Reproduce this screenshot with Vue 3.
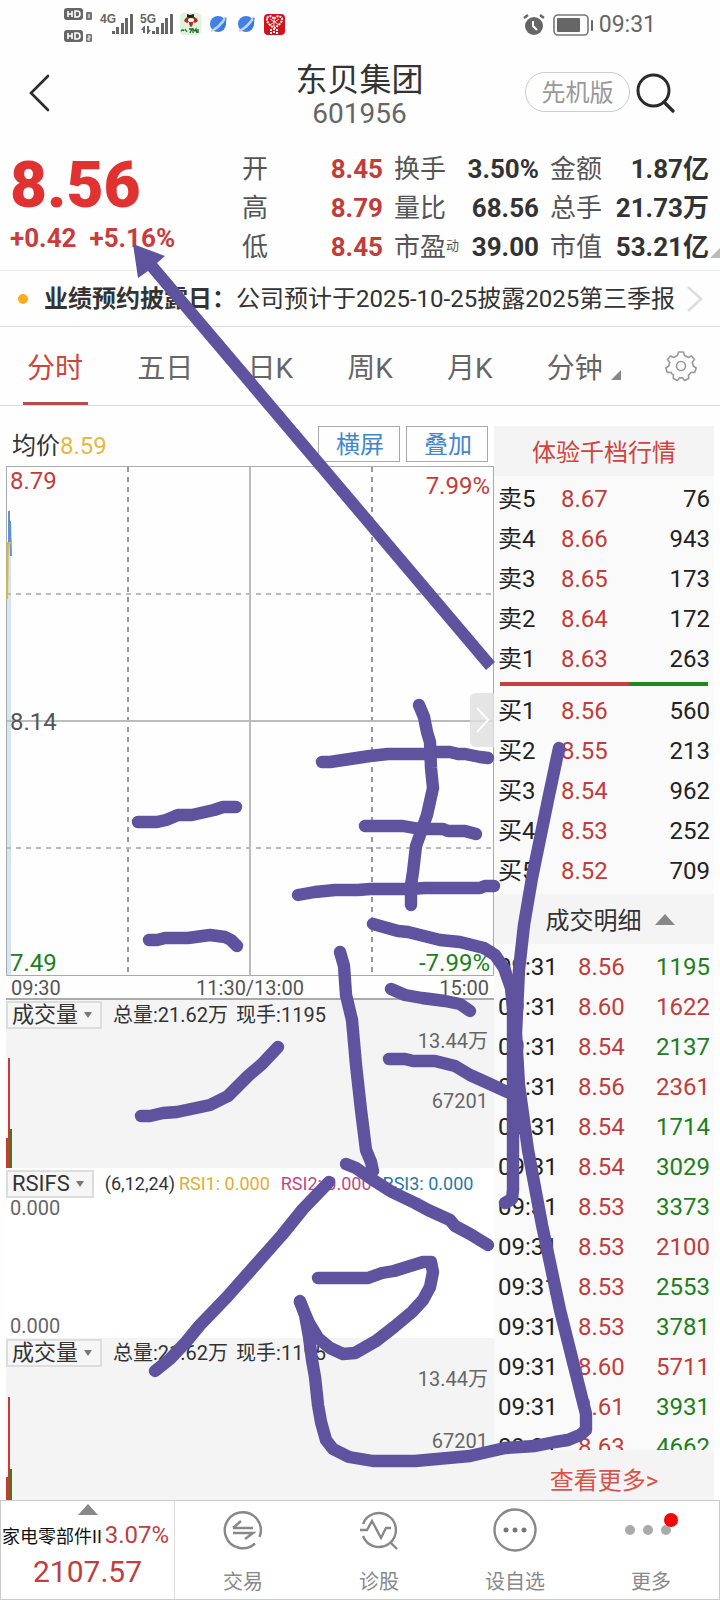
<script setup>
const quotes = [
  ['开', '8.45', '换手', '3.50%', '金额', '1.87亿'],
  ['高', '8.79', '量比', '68.56', '总手', '21.73万'],
  ['低', '8.45', '市盈', '39.00', '市值', '53.21亿'],
]
const tabs = ['分时', '五日', '日K', '周K', '月K']
const sells = [
  ['卖5', '8.67', '76'],
  ['卖4', '8.66', '943'],
  ['卖3', '8.65', '173'],
  ['卖2', '8.64', '172'],
  ['卖1', '8.63', '263'],
]
const buys = [
  ['买1', '8.56', '560'],
  ['买2', '8.55', '213'],
  ['买3', '8.54', '962'],
  ['买4', '8.53', '252'],
  ['买5', '8.52', '709'],
]
const trades = [
  ['8.56', '1195', 'down'],
  ['8.60', '1622', 'up'],
  ['8.54', '2137', 'down'],
  ['8.56', '2361', 'up'],
  ['8.54', '1714', 'down'],
  ['8.54', '3029', 'down'],
  ['8.53', '3373', 'down'],
  ['8.53', '2100', 'up'],
  ['8.53', '2553', 'down'],
  ['8.53', '3781', 'down'],
  ['8.60', '5711', 'up'],
  ['8.61', '3931', 'down'],
  ['8.63', '4662', 'down'],
]
const strokes = [
  '322,762 330,762 350,759 370,756 388,754 425,754 432,752 450,752 458,754 465,754 480,757 488,758',
  '419,705 424,717 427,732 430,742 431,768 433,788 427,815 416,846 413,872 411,885 411,905',
  '365,826 403,826 420,829 443,829 448,831 465,831 476,834',
  '298,895 315,892 335,890 358,890 370,889 410,889 425,888 480,888 485,886 494,886',
  '138,822 157,822 166,820 178,815 192,815 214,810 223,807 236,807',
  '149,940 157,940 165,938 188,938 210,935 225,937 231,940 237,946',
  '340,952 344,966 346,995 352,1020 356,1065 361,1110 366,1150 371,1162 373,1171',
  '373,924 398,931 408,932 440,940 460,942 484,948 495,955 504,968 511,988 513,1010 513,1190 512,1199 505,1203',
  '391,989 405,995 422,998 445,1001 460,1004 470,1011',
  '389,1059 405,1059 413,1061 435,1061 455,1066 470,1075 490,1084 507,1092',
  '346,1164 356,1168 370,1178 392,1192 415,1203 428,1210 450,1220 455,1226 470,1234 488,1245',
  '559,748 548,800 532,878 524,925 519,970 516,1033 519,1085 528,1150 542,1225 560,1310 580,1390 586,1414 586,1430 580,1435 568,1440 555,1442 535,1446 505,1448 470,1456 415,1461 373,1461 349,1457 333,1449 326,1440 321,1422 318,1405 315,1377 312,1360 309,1337 305,1315 300,1301',
  '318,1278 368,1278 382,1273 394,1271 423,1262 431,1262 433,1272 430,1287 423,1300 412,1312 394,1327 376,1341 355,1353 343,1354 330,1348 318,1338 309,1323 300,1302',
  '329,1182 303,1209 282,1235 227,1297 200,1325 186,1342 170,1359 155,1371',
  '141,1116 150,1116 163,1113 177,1112 210,1105 228,1096 248,1076 262,1064 278,1047',
]
</script>

<template>
  <div class="app">
    <div class="status">
      <div class="left">
        <svg class="hd" width="30" height="36" viewBox="0 0 30 36">
          <rect x="0" y="0" width="19" height="12" rx="3" fill="#666" />
          <rect x="0" y="22" width="19" height="12" rx="3" fill="#666" />
          <rect x="22" y="4" width="6" height="8" rx="1" fill="#777" />
          <rect x="22" y="26" width="6" height="8" rx="1" fill="#777" />
          <path d="M4 3v6M4 6h4M8 3v6M11 3v6h2q3 0 3-3t-3-3zM4 25v6M4 28h4M8 25v6M11 25v6h2q3 0 3-3t-3-3z" fill="none" stroke="#fff" stroke-width="1.6" />
          <path d="M25 6v4M24 28h2v2h-2v2h2" fill="none" stroke="#fff" stroke-width="1" />
        </svg>
        <div class="sig">
          <span>4G</span>
          <svg width="34" height="22" viewBox="0 0 34 22" fill="#666"><path d="M12 18h3v3h-3zM16 14h3v7h-3zM21 10h3v11h-3zM25 5h3v16h-3zM30 1h3v20h-3z" /></svg>
        </div>
        <div class="sig">
          <span>5G</span>
          <svg width="34" height="22" viewBox="0 0 34 22" fill="#666"><path d="M12 18h3v3h-3zM16 14h3v7h-3zM21 10h3v11h-3zM25 5h3v16h-3zM30 1h3v20h-3zM1 17l3-4h1v7H3v-3zM7 13h2v4h2l-3 4H7z" /></svg>
        </div>
        <svg class="a1" width="21" height="22" viewBox="0 0 21 22">
          <rect width="21" height="22" rx="4" fill="#dcf3dc" /><path d="M4 8q2-5 7-4q5-1 7 4l-3 2-2-1q0 4-2 5q-2-1-2-5L7 10z" fill="#b32a20" /><path d="M7 1l3 1 4-1v3l-4 1-3-1z" fill="#222" /><ellipse cx="11" cy="7" rx="3" ry="2" fill="#fff" />
          <path d="M1 18q2-2 3 0M5 16l2 3M9 16h3l-2 4M13 20v-4l2 2 1-2 1 4M18 16v4" fill="none" stroke="#207028" stroke-width="1.3" />
        </svg>
        <svg v-for="n in 2" :key="n" class="planet" width="18" height="18" viewBox="0 0 18 18">
          <circle cx="8" cy="9" r="8" fill="#447fe5" /><path d="M1 16Q9 13 16 2" fill="none" stroke="#bcd5ff" stroke-width="2.4" /><path d="M10 15Q16 11 16 3" fill="none" stroke="#2f69d0" stroke-width="1" />
        </svg>
        <svg class="a4" width="21" height="21" viewBox="0 0 21 21">
          <rect width="21" height="21" rx="4" fill="#cf151b" /><path d="M3 4q4-4 7 1q4-5 8-1q1 5-8 10Q2 9 3 4zM7 15v5M10 14v6M13 15v5" fill="none" stroke="#fff" stroke-width="2" stroke-dasharray="2 1" /><path d="M6 5l9 6M15 5l-9 6M10 4v9" stroke="#ffdede" />
        </svg>
      </div>
      <div class="right">
        <svg width="22" height="22" viewBox="0 0 22 22">
          <circle cx="11" cy="12" r="9" fill="#666" /><path d="M10 7v5l4 4" fill="none" stroke="#fff" stroke-width="2" /><path d="M1 4l4-3M21 4l-4-3" stroke="#666" stroke-width="2.4" />
        </svg>
        <svg width="40" height="22" viewBox="0 0 40 22">
          <rect x="1" y="1" width="34" height="20" rx="4" fill="none" stroke="#777" stroke-width="1.6" /><rect x="4" y="4" width="23" height="14" rx="1" fill="#666" /><rect x="38" y="6" width="2" height="11" rx="1" fill="#666" />
        </svg>
        <span class="clock">09:31</span>
      </div>
    </div>

    <header class="head">
      <button class="back" aria-label="返回">
        <svg width="22" height="40" viewBox="0 0 22 40"><path d="M19 3L2 20L19 37" fill="none" stroke="#2a2a2a" stroke-width="2.6" stroke-linecap="round" /></svg>
      </button>
      <div class="title"><h1>东贝集团</h1><p>601956</p></div>
      <div class="tools">
        <button class="pill">先机版</button>
        <button class="find" aria-label="搜索">
          <svg width="40" height="42" viewBox="0 0 40 42"><circle cx="17.500" cy="18.500" r="15.500" fill="none" stroke="#2a2a2a" stroke-width="3" /><path d="M28 30L37 39" stroke="#2a2a2a" stroke-width="3.4" stroke-linecap="round" /></svg>
        </button>
      </div>
    </header>

    <section class="quote">
      <div class="now">
        <strong>8.56</strong>
        <div class="chg"><span>+0.42</span><span>+5.16%</span></div>
      </div>
      <div class="stats">
        <template v-for="(q, i) in quotes" :key="i">
          <span class="k">{{ q[0] }}</span><b class="up">{{ q[1] }}</b>
          <span class="k two">{{ q[2] }}<small v-if="i === 2">动</small></span><b>{{ q[3] }}</b>
          <span class="k two">{{ q[4] }}</span><b>{{ q[5] }}</b>
        </template>
      </div>
      <i class="corner"></i>
    </section>

    <a class="news" href="#">
      <i class="dot"></i><b>业绩预约披露日：</b><span>公司预计于2025-10-25披露2025第三季报</span>
      <svg width="18" height="28" viewBox="0 0 18 28"><path d="M2 2L15 14L2 26" fill="none" stroke="#ddd" stroke-width="2.600" /></svg>
    </a>

    <nav class="tabs">
      <button v-for="(t, i) in tabs" :key="t" :class="{ on: i === 0 }">{{ t }}</button>
      <button class="minute">分钟<svg width="10" height="10" viewBox="0 0 10 10"><path d="M10 0V10H0z" fill="#888" /></svg></button>
      <button class="setup" aria-label="设置">
        <svg width="32" height="32" viewBox="0 0 32 32" fill="none" stroke="#999" stroke-width="1.600" stroke-linejoin="round">
          <path d="M12.500 5.500L13.500 2h5l1 3.500q2 .6 3.500 2l3.500-1.600 3 3.600-2.300 3q1 1.700 1 3.500l3 2-1.500 4.500-3.700-.2q-1 1.700-2.500 2.700l.3 3.500-4.300 2-2-2.800q-1.500.3-3 0l-2 2.800-4.300-2 .3-3.500q-1.500-1-2.500-2.700l-3.700.2L.8 18l3-2q0-1.800 1-3.500l-2.300-3 3-3.600L9 7.500q1.500-1.400 3.500-2z" /><circle cx="16" cy="16" r="4.500" />
        </svg>
      </button>
    </nav>

    <main class="body">
      <div class="charts">
        <div class="avg">
          <span>均价<em>8.59</em></span>
          <button>横屏</button><button>叠加</button>
        </div>
        <div class="plot">
          <svg viewBox="0 0 488 510" preserveAspectRatio="none" fill="none">
            <path d="M0 150L3 50L5 80V509H0z" fill="#d3e6f5" />
            <path d="M122 1V506M366 1V506" stroke="#999" stroke-width="2" stroke-dasharray="5 5" />
            <path d="M0 128H488M0 382H488" stroke="#bbb" stroke-width="2" stroke-dasharray="5 5" />
            <path d="M244 0V510M0 255H488" stroke="#bcbcbc" stroke-width="2" />
            <path d="M.5 .5H487.500V509.500H.5z" stroke="#aaa" />
            <path d="M3 45V78M4 55L5 90" stroke="#5f95cf" stroke-width="2" />
            <path d="M1 133L2 77H6" stroke="#dbb83c" stroke-width="2" />
          </svg>
          <span class="up tl">8.79</span><span class="up tr">7.99%</span>
          <span class="ml">8.14</span>
          <span class="down bl">7.49</span><span class="down br">-7.99%</span>
          <button class="fold" aria-label="收起"><svg width="16" height="28" viewBox="0 0 16 28"><path d="M2 2L13 14L2 26" fill="none" stroke="#fff" stroke-width="2" /></svg></button>
        </div>
        <div class="times"><span>09:30</span><span>11:30/13:00</span><span>15:00</span></div>

        <section v-for="n in 2" :key="n" :class="['vol', 'vol' + n]">
          <div class="legend"><button class="pick">成交量<i></i></button><span>总量:21.62万</span><span>现手:1195</span></div>
          <p class="max">13.44万</p><p class="mid">67201</p>
          <div class="bars"><i></i><i></i><i></i></div>
        </section>

        <section class="rsi">
          <div class="legend"><button class="pick">RSIFS<i></i></button><span>(6,12,24)</span><span class="r1">RSI1: 0.000</span><span class="r2">RSI2: 0.000</span><span class="r3">RSI3: 0.000</span></div>
          <p>0.000</p><p>0.000</p>
        </section>
      </div>

      <aside class="book">
        <button class="cap promo">体验千档行情</button>
        <div class="depth">
          <div v-for="r in sells" :key="r[0]" class="row"><span>{{ r[0] }}</span><span class="up">{{ r[1] }}</span><span>{{ r[2] }}</span></div>
          <div class="ratio"><i></i><i></i></div>
          <div v-for="r in buys" :key="r[0]" class="row"><span>{{ r[0] }}</span><span class="up">{{ r[1] }}</span><span>{{ r[2] }}</span></div>
        </div>
        <button class="cap detail">成交明细<i class="tri"></i></button>
        <div class="ticks">
          <div v-for="(r, i) in trades" :key="i" class="row deal"><span>09:31</span><span class="up">{{ r[0] }}</span><span :class="r[2]">{{ r[1] }}</span></div>
        </div>
        <a class="cap more" href="#">查看更多&gt;</a>
      </aside>
    </main>

    <footer class="bottom">
      <a class="sector" href="#">
        <i class="tri"></i>
        <span class="line">家电零部件II<em>3.07%</em></span>
        <strong>2107.57</strong>
      </a>
      <button>
        <svg width="44" height="44" viewBox="0 0 44 44" fill="none" stroke="#888" stroke-width="2.400"><path d="M38.500 29A18 18 0 1 0 34 35.500" /><path d="M12 20H32M12 20L20 13M12 25H32L24 31M12 20H20" /></svg>
        <span>交易</span>
      </button>
      <button>
        <svg width="44" height="44" viewBox="0 0 44 44" fill="none" stroke="#888" stroke-width="2.400"><path d="M6 16A17 17 0 1 1 6 28M33 34L40 41" /><path d="M3 22H10L15 13L24 30L29 20H34" /></svg>
        <span>诊股</span>
      </button>
      <button>
        <svg width="44" height="44" viewBox="0 0 44 44"><circle cx="22" cy="22" r="20.500" fill="none" stroke="#888" stroke-width="2.400" /><g fill="#777"><circle cx="13" cy="22" r="2.500" /><circle cx="22" cy="22" r="2.500" /><circle cx="31" cy="22" r="2.500" /></g></svg>
        <span>设自选</span>
      </button>
      <button>
        <svg width="60" height="44" viewBox="0 0 60 44"><g fill="#aaa"><circle cx="9" cy="22" r="5" /><circle cx="27" cy="22" r="5" /><circle cx="45" cy="22" r="5" /></g><circle cx="50" cy="12" r="7" fill="#f00" /></svg>
        <span>更多</span>
      </button>
    </footer>

    <svg class="ink" viewBox="0 0 720 1600" fill="none" stroke="#5f539f" stroke-width="12.400" stroke-linecap="round" stroke-linejoin="round">
      <polyline v-for="s in strokes" :key="s" :points="s" />
      <polygon points="133,244 165,256 157,263 495,662 486,670 148,271 138,278" fill="#5f539f" stroke="none" />
    </svg>
  </div>
</template>

<style>
body { margin: 0; background: #fefefe; }
</style>

<style scoped>
.app { position: relative; font: 24px/32px Roboto, "Noto Sans CJK SC", sans-serif; color: #333; background: #fefefe; overflow: hidden; }
.app * { box-sizing: border-box; }
button { font: inherit; color: inherit; background: none; border: 0; padding: 0; margin: 0; }
a { color: inherit; text-decoration: none; }
h1, p { margin: 0; font-weight: 400; }
em, i { font-style: normal; }
svg { display: block; flex: none; }
.up { color: #c23c3a; }
.down { color: #1c801c; }

.status { display: flex; justify-content: space-between; height: 50px; padding: 0 64px; }
.left, .right { display: flex; }
.hd { margin-top: 8px; }
.sig { position: relative; margin: 13px 0 0 6px; }
.sig span { position: absolute; left: 0; top: 0; font: 700 12px/12px "Liberation Sans", sans-serif; color: #666; }
.a1 { margin: 13px 0 0 6px; }
.planet { margin: 15px 0 0 9px; }
.planet + .planet { margin-left: 10px; }
.a4 { margin: 14px 0 0 8px; }
.right { align-items: center; gap: 6px; }
.right svg:first-child { margin-right: 2px; }
.clock { font-size: 23px; line-height: 50px; color: #666; }

.head { display: grid; grid-template-columns: 1fr auto 1fr; height: 86px; padding: 0 44px 0 29px; align-items: start; }
.back { width: 22px; margin-top: 23px; }
.title { text-align: center; padding-left: 14px; }
.title h1 { font-size: 32px; line-height: 40px; padding-top: 10px; }
.title p { font-size: 28px; line-height: 28px; color: #666; }
.tools { display: flex; justify-content: flex-end; gap: 6px; }
.pill { width: 105px; height: 40px; margin-top: 22px; border: 1px solid #ccc; border-radius: 20px; font-size: 24px; line-height: 40px; color: #999; }
.find { margin-top: 22px; }

.quote { position: relative; display: flex; height: 134px; padding: 14px 11px 0 10px; }
.now { flex: 1; color: #c83c3c; font-weight: 700; }
.now strong { display: block; font-size: 64px; line-height: 72px; color: #e13232; }
.chg { display: flex; gap: 13px; font-size: 26px; line-height: 32px; white-space: nowrap; }
.stats { display: grid; grid-template-columns: 67px 74px 70px 86px 80px 90px; font-size: 26px; grid-auto-rows: 39px; line-height: 39px; white-space: nowrap; }
.stats b { text-align: right; }
.k { color: #555; }
.two { padding-left: 11px; }
.k small { font-size: 13px; line-height: 13px; vertical-align: 6px; }
.stats b:nth-of-type(3n) { margin-left: -20px; }
.corner { position: absolute; right: 0; bottom: 12px; border: 5px solid transparent; border-right-color: #bbb; border-bottom-color: #bbb; }

.news { display: flex; align-items: center; height: 57px; border-top: 1px solid #eee; border-bottom: 1px solid #ddd; padding: 0 16px 0 18px; white-space: nowrap; }
.dot { width: 10px; height: 10px; margin-right: 16px; border-radius: 50%; background: #fbad1c; }
.news svg { margin-left: auto; }

.tabs { display: flex; justify-content: space-between; height: 79px; padding: 0 23px; border-bottom: 1px solid #ddd; font-size: 28px; color: #666; }
.tabs button { padding: 6px 5px 0 4px; }
.tabs .on { color: #cf4340; background: linear-gradient(#b94c4a, #b94c4a) bottom / 100% 3px no-repeat; }
.tabs .minute { display: flex; align-items: center; gap: 8px; }
.minute svg { margin-top: 12px; }
.tabs .setup { padding: 0; margin-left: -6px; }

.body { display: flex; padding: 20px 6px 0; height: 1094px; }
.charts { flex: 1; display: flex; flex-direction: column; min-width: 0; }
.avg { display: flex; gap: 6px; height: 40px; padding: 0 6px 4px; line-height: 40px; }
.avg span { flex: 1; }
.avg em { color: #e4b93e; }
.avg button { width: 82px; border: 1px solid #aaa; color: #4486c9; line-height: 36px; padding-left: 2px; }
.plot { position: relative; height: 510px; }
.plot > svg { width: 100%; height: 100%; }
.plot span { position: absolute; line-height: 28px; }
.tl { left: 4px; top: 1px; } .tr { right: 4px; top: 6px; } .ml { left: 4px; top: 242px; color: #555; }
.bl { left: 4px; bottom: -1px; } .br { right: 4px; bottom: -1px; }
.fold { position: absolute; right: 0; top: 227px; width: 24px; height: 54px; background: #dededecc; border-radius: 6px 0 0 6px; padding-left: 5px; }
.times { display: grid; grid-template-columns: 1fr auto 1fr; height: 24px; padding: 0 5px; font-size: 20px; line-height: 24px; color: #555; border-bottom: 2px solid #aaa; }
.times span:last-child { text-align: right; }
.vol { position: relative; display: flex; flex-direction: column; align-items: stretch; height: 168px; background: #f4f4f4; color: #666; font-size: 20px; }
.legend { display: flex; align-items: center; height: 28px; padding-top: 1px; font-size: 20px; line-height: 28px; color: #333; white-space: nowrap; }
.legend span { margin-right: 8px; }
.pick { display: flex; align-items: center; gap: 6px; height: 28px; padding: 0 8px 0 4px; margin-right: 11px; border: 2px solid #ddd; background: #f6f6f6; font-size: 22px; line-height: 24px; }
.pick i { border: 4px solid transparent; border-top: 6px solid #777; border-bottom: 0; }
.vol p { text-align: right; padding-right: 6px; line-height: 24px; }
.vol .max { margin-top: 1px; }
.vol .mid { margin-top: 36px; }
.bars { position: absolute; left: 0; bottom: 0; display: flex; align-items: flex-end; }
.bars i { width: 2px; height: 30px; background: #c23c34; }
.bars i:nth-child(2) { height: 110px; }
.bars i:nth-child(3) { height: 39px; background: #3d7a1c; }
.vol2 { order: 3; flex: 1; height: auto; }
.vol2 .bars i:first-child { height: 23px; }
.vol2 .bars i:nth-child(2) { height: 103px; }
.vol2 .bars i:nth-child(3) { height: 31px; }
.vol2 .mid { margin-top: 38px; }
.rsi { order: 2; height: 170px; display: flex; flex-direction: column; font-size: 20px; line-height: 24px; color: #666; background: #fff; }
.rsi .legend { padding-top: 3px; height: 28px; font-size: 18px; }
.rsi .legend span { margin-right: 4px; }
.rsi .legend .r1, .rsi .legend .r2 { margin-right: 11px; }
.rsi p { padding-left: 4px; }
.rsi p:last-child { margin-top: auto; }
.r1 { color: #e2ac35; } .r2 { color: #bd4a83; } .r3 { color: #2878a3; }

.book { display: flex; flex-direction: column; width: 220px; background: #fafafa; color: #222; }
.cap { display: flex; justify-content: center; align-items: center; height: 50px; flex: none; padding-top: 3px; background: #f4f4f4; color: #333; }
.promo { color: #d04340; }
.depth { height: 418px; padding: 3px 4px 0; }
.row { display: grid; grid-template-columns: 63px 1fr auto; height: 40px; line-height: 40px; }
.deal { grid-template-columns: 80px 1fr auto; }
.ratio { display: flex; height: 12px; padding: 3px 2px 5px; }
.ratio i { flex: 129; background: #c8403e; }
.ratio i + i { flex: 79; background: #1c8a1c; }
.detail { gap: 13px; padding-left: 12px; }
.tri { border: 10px solid transparent; border-top: 0; border-bottom: 11px solid #888; }
.detail .tri { margin-bottom: 3px; }
.ticks { flex: 1; padding: 3px 4px 0; overflow: hidden; min-height: 0; }
.more { color: #d95448; padding-top: 12px; }

.bottom { display: flex; height: 100px; border: 1px solid #ccc; background: #fff; }
.bottom button { flex: 1; display: flex; flex-direction: column; align-items: center; font-size: 20px; line-height: 24px; color: #888; padding-top: 7px; }
.bottom button span { margin-top: 18px; }
.sector { width: 174px; border-right: 1px solid #ddd; display: flex; flex-direction: column; align-items: center; padding-top: 3px; color: #111; }
.line { align-self: flex-start; padding-left: 1px; margin-top: 4px; font-size: 18px; line-height: 32px; white-space: nowrap; }
.line em { font-size: 24px; margin-left: 3px; color: #bd3f3f; }
.sector strong { font-weight: 400; font-size: 30px; line-height: 38px; color: #bd3f3f; }
.ink { position: absolute; left: 0; top: 0; width: 100%; pointer-events: none; }
</style>
